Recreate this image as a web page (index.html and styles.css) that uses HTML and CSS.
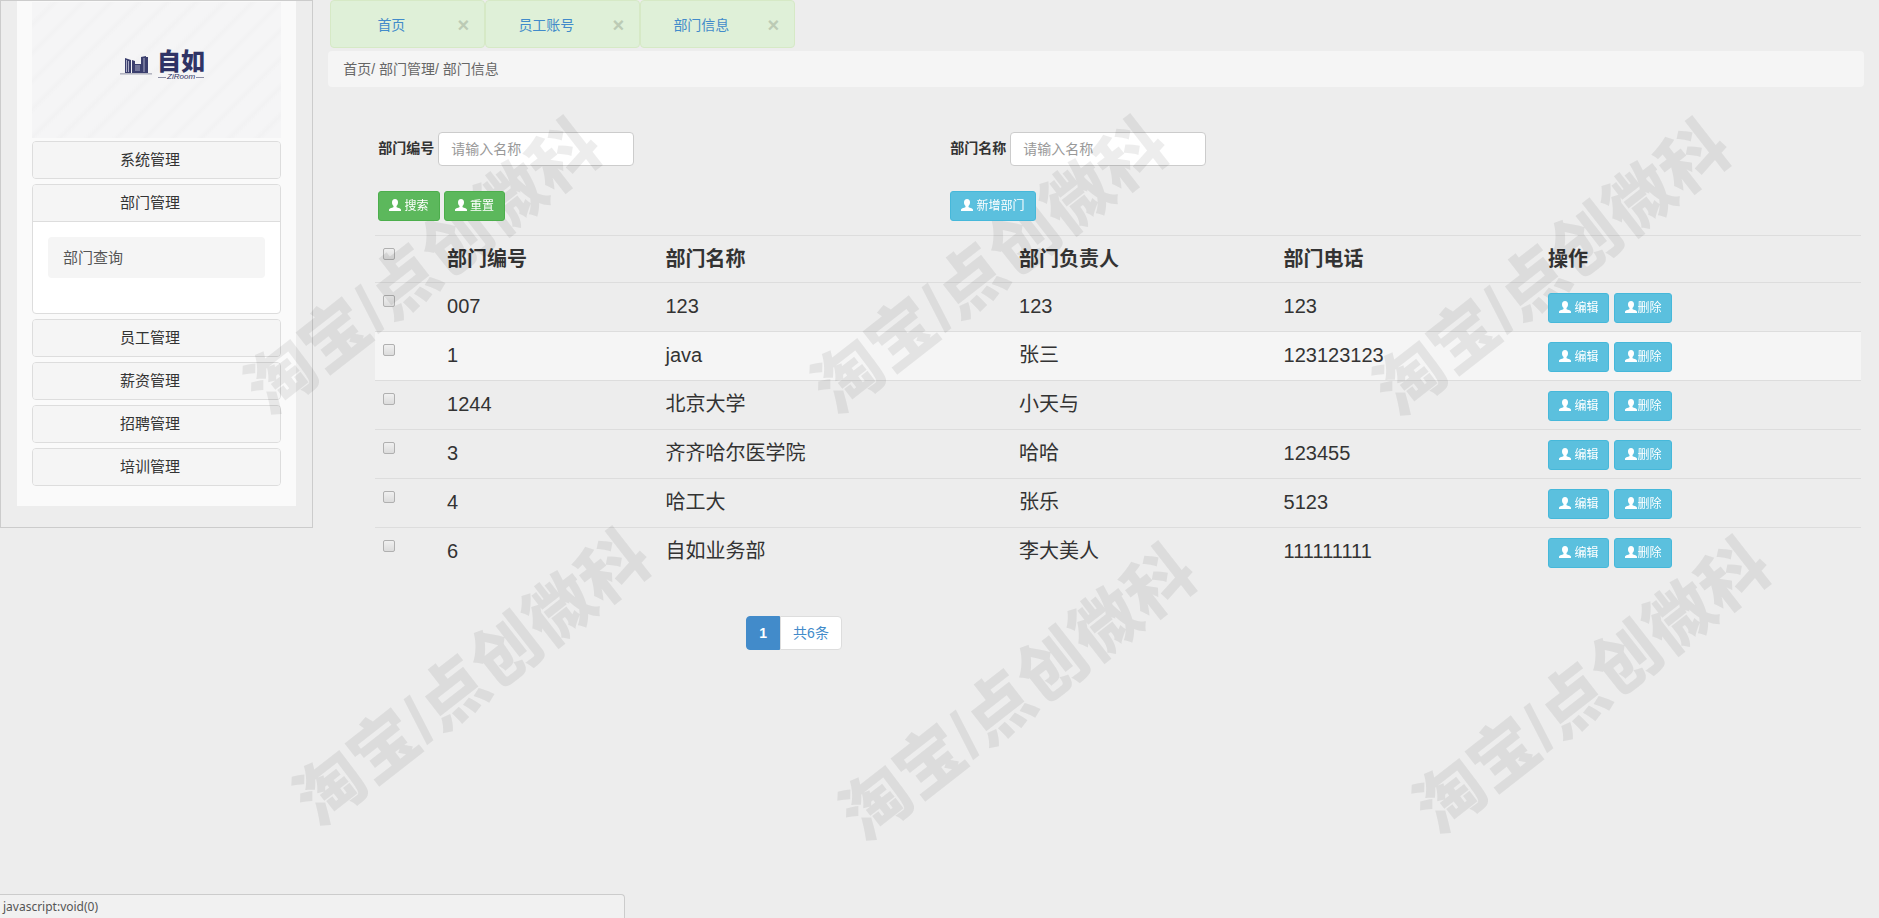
FILE: index.html
```html
<!DOCTYPE html>
<html lang="zh-CN">
<head>
    <meta charset="UTF-8">
    <meta name="viewport" content="width=device-width, initial-scale=1.0">
    <title>部门信息</title>
    <link rel="stylesheet" href="styles.css">
</head>
<body>
    <!-- user icon shared by all buttons -->
    <svg class="sprite" aria-hidden="true">
        <symbol id="user" viewBox="0 0 12 12">
            <path d="M6 0C4 0 3 1.300 3 3.200c0 1.600.6 3 1.500 3.800v1C4.500 8.800 0 9 0 10.800V12h12v-1.200C12 9 7.500 8.800 7.500 8V7C8.400 6.200 9 4.800 9 3.200 9 1.300 8 0 6 0z"/>
        </symbol>
    </svg>

    <div class="row">
        <aside class="sidebar">
            <div class="sidebar-inner">
                <div class="logo">
                    <svg class="logo-mark" width="32" height="20" viewBox="0 0 32 20" aria-hidden="true">
                        <path class="ground" d="M0 18.500h32v.8H0z"/>
                        <path d="M5 3l6 2v13H5zM12 5l3 1v12h-3zM15 9h6v9h-6zM21 2l5-1v17h-5zM26 2h2v16h-2z"/>
                        <path class="gap" d="M6.500 5v12M8.500 6v11M15 11h5M15 13h5M15 15h5M24 3v14"/>
                    </svg>
                    <div class="logo-text">
                        <span class="logo-name">自如</span>
                        <span class="logo-en">ZiRoom</span>
                    </div>
                </div>
                <nav class="menu">
                    <div class="panel"><a class="panel-heading" href="#">系统管理</a></div>
                    <div class="panel">
                        <a class="panel-heading" href="#">部门管理</a>
                        <div class="panel-body">
                            <a class="sub-item" href="#">部门查询</a>
                        </div>
                    </div>
                    <div class="panel"><a class="panel-heading" href="#">员工管理</a></div>
                    <div class="panel"><a class="panel-heading" href="#">薪资管理</a></div>
                    <div class="panel"><a class="panel-heading" href="#">招聘管理</a></div>
                    <div class="panel"><a class="panel-heading" href="#">培训管理</a></div>
                </nav>
            </div>
        </aside>

        <main class="main">
            <div class="tabs">
                <div class="tab"><a href="#">首页</a><button class="close" type="button" aria-label="关闭">×</button></div>
                <div class="tab"><a href="#">员工账号</a><button class="close" type="button" aria-label="关闭">×</button></div>
                <div class="tab"><a href="#">部门信息</a><button class="close" type="button" aria-label="关闭">×</button></div>
            </div>
            <div class="breadcrumb">首页/ 部门管理/ 部门信息</div>

            <div class="content">
                <form class="search">
                    <div class="field">
                        <label for="deptNo">部门编号</label>
                        <input id="deptNo" type="text" placeholder="请输入名称">
                    </div>
                    <div class="field">
                        <label for="deptName">部门名称</label>
                        <input id="deptName" type="text" placeholder="请输入名称">
                    </div>
                    <div class="actions">
                        <button class="btn btn-success" type="button"><svg class="icon"><use href="#user"/></svg> 搜索</button>
                        <button class="btn btn-success" type="reset"><svg class="icon"><use href="#user"/></svg> 重置</button>
                    </div>
                    <div class="actions">
                        <button class="btn btn-info" type="button"><svg class="icon"><use href="#user"/></svg> 新增部门</button>
                    </div>
                </form>

                <table class="table">
                    <thead>
                        <tr>
                            <th class="col-check"><input type="checkbox" aria-label="全选"></th>
                            <th class="col-no">部门编号</th>
                            <th class="col-name">部门名称</th>
                            <th class="col-leader">部门负责人</th>
                            <th class="col-phone">部门电话</th>
                            <th>操作</th>
                        </tr>
                    </thead>
                    <tbody id="rows"></tbody>
                </table>

                <ul class="pagination">
                    <li><a class="active" href="#">1</a></li>
                    <li><a href="#">共6条</a></li>
                </ul>
            </div>
        </main>
    </div>

    <div class="watermarks" aria-hidden="true">
        <span class="wm wm-1">淘宝/点创微科</span>
        <span class="wm wm-2">淘宝/点创微科</span>
        <span class="wm wm-3">淘宝/点创微科</span>
        <span class="wm wm-4">淘宝/点创微科</span>
        <span class="wm wm-5">淘宝/点创微科</span>
        <span class="wm wm-6">淘宝/点创微科</span>
    </div>

    <div class="status">javascript:void(0)</div>

    <script>
        const depts = [
            ['007', '123', '123', '123'],
            ['1', 'java', '张三', '123123123'],
            ['1244', '北京大学', '小天与', ''],
            ['3', '齐齐哈尔医学院', '哈哈', '123455'],
            ['4', '哈工大', '张乐', '5123'],
            ['6', '自如业务部', '李大美人', '111111111']
        ];
        const icon = '<svg class="icon"><use href="#user"/></svg>';

        document.getElementById('rows').innerHTML = depts.map((d, i) => `
            <tr${i === 1 ? ' class="hover"' : ''}>
                <td><input type="checkbox" aria-label="选择 ${d[0]}"></td>
                ${d.map(v => `<td>${v}</td>`).join('')}
                <td><div class="row-actions">
                    <button class="btn btn-info" type="button">${icon} 编辑</button>
                    <button class="btn btn-info" type="button">${icon}删除</button>
                </div></td>
            </tr>`).join('');
    </script>
</body>
</html>
```

FILE: styles.css
```css
* {
    box-sizing: border-box;
}
body {
    margin: 0;
    min-height: 100vh;
    position: relative;
    overflow-x: hidden;
    background: #ededed;
    color: #333;
    font-family: "Liberation Sans", "Noto Sans CJK SC", sans-serif;
    font-size: 14px;
    line-height: 20px;
}
a {
    color: #428bca;
    text-decoration: none;
}
.sprite {
    display: none;
}
.row {
    display: flex;
    align-items: flex-start;
}

/* sidebar */
.sidebar {
    width: 16.67%;
    padding: 0 16px 21px;
    border: 1px solid #ccc;
}
.sidebar-inner {
    padding: 1px 15px 20px;
    background: #fafafa;
}
.logo {
    display: flex;
    align-items: center;
    justify-content: center;
    gap: 5px;
    height: 136px;
    margin-bottom: 3px;
    padding: 0 0 10px 12px;
    background: repeating-linear-gradient(135deg, #f5f5f6 0 12px, #f2f2f3 16px, #f5f5f6 20px);
}
.logo-mark {
    fill: #3b3f6e;
}
.logo-mark .ground {
    fill: #77798f;
}
.logo-mark .gap {
    fill: none;
    stroke: #a9abc4;
}
.logo-text {
    display: flex;
    flex-direction: column;
    align-items: center;
    color: #2f3365;
}
.logo-name {
    font-size: 24px;
    font-weight: 900;
    line-height: 24px;
}
.logo-en {
    display: flex;
    align-items: center;
    gap: 1px;
    font-size: 8px;
    font-style: italic;
    line-height: 6px;
}
.logo-en::before,
.logo-en::after {
    content: "";
    width: 8px;
    height: 1px;
    background: #8a8ca3;
}
.menu {
    display: flex;
    flex-direction: column;
    gap: 5px;
}
.panel {
    border: 1px solid #ddd;
    border-radius: 4px;
    background: #fff;
    overflow: hidden;
}
.panel-heading {
    display: block;
    padding: 8px 13px 8px 0;
    background: #f5f5f5;
    color: #333;
    font-size: 15px;
    text-align: center;
}
.panel-body {
    height: 92px;
    padding: 15px;
    border-top: 1px solid #ddd;
}
.sub-item {
    display: block;
    padding: 11px 15px 10px;
    border-radius: 4px;
    background: #f5f5f5;
    color: #555;
    font-size: 15px;
}

/* tabs and breadcrumb */
.main {
    flex: 1;
    padding: 0 15px;
}
.tabs {
    display: flex;
    padding-left: 2px;
}
.tab {
    display: flex;
    align-items: center;
    width: 155px;
    height: 48px;
    padding: 2px 15px 0 0;
    border: 1px solid #d6e9c6;
    border-radius: 4px;
    background: #dff0d8;
}
.tab a {
    flex: 1;
    padding-right: 6px;
    text-align: center;
}
.close {
    padding: 0;
    border: 0;
    background: none;
    color: #bccbb5;
    font-family: inherit;
    font-size: 20px;
    font-weight: bold;
    line-height: 20px;
    cursor: pointer;
}
.breadcrumb {
    margin-top: 3px;
    padding: 8px 15px;
    border-radius: 4px;
    background: #f5f5f5;
    color: #666;
}

/* search form */
.content {
    padding: 45px 3px 0 47px;
}
.search {
    display: grid;
    grid-template-columns: 572px 1fr;
    row-gap: 25px;
    padding-left: 3px;
}
.field {
    display: flex;
    align-items: center;
    gap: 4px;
}
.field label {
    margin-bottom: 3px;
    font-weight: bold;
}
.field input {
    width: 196px;
    height: 34px;
    padding: 6px 12px;
    border: 1px solid #ccc;
    border-radius: 4px;
    background: #fff;
    font: inherit;
}
.field input::placeholder {
    color: #999;
}
.actions {
    display: flex;
    gap: 4px;
}
.row-actions {
    display: flex;
    gap: 5px;
    padding-top: 2px;
}
.btn {
    position: relative;
    z-index: 2;
    padding: 5px 10px;
    border: 1px solid;
    border-radius: 3px;
    color: #fff;
    font-family: inherit;
    font-size: 12px;
    line-height: 18px;
    cursor: pointer;
}
.btn-success {
    background: #5cb85c;
    border-color: #4cae4c;
}
.btn-info {
    background: #5bc0de;
    border-color: #46b8da;
}
.icon {
    width: 12px;
    height: 12px;
    fill: currentColor;
    vertical-align: -1px;
}

/* table */
.table {
    width: 100%;
    margin-top: 14px;
    border-collapse: collapse;
    table-layout: fixed;
    font-size: 20px;
    line-height: 30px;
}
.table th,
.table td {
    padding: 8px;
    border-top: 1px solid #ddd;
    text-align: left;
    vertical-align: top;
}
.table th {
    height: 47px;
}
.table td {
    height: 49px;
}
.table .hover {
    background: #f5f5f5;
}
.table input {
    appearance: none;
    display: block;
    width: 12px;
    height: 12px;
    margin: 4px 0 0;
    border: 1px solid #b0b0b0;
    border-radius: 2px;
    background: linear-gradient(#f0f0f0, #dcdcdc);
}
.table input:checked {
    background: #428bca;
}
.col-check { width: 4.3%; }
.col-no { width: 14.7%; }
.col-name { width: 23.8%; }
.col-leader { width: 17.8%; }
.col-phone { width: 17.8%; }

/* pagination */
.pagination {
    display: flex;
    justify-content: center;
    margin: 39px 0 0;
    padding: 0 648px 0 0;
    list-style: none;
}
.pagination a {
    display: block;
    padding: 6px 12px;
    border: 1px solid #ddd;
    border-radius: 0 4px 4px 0;
    background: #fff;
}
.pagination .active {
    border-color: #428bca;
    border-radius: 4px 0 0 4px;
    background: #428bca;
    color: #fff;
    font-weight: bold;
}

/* watermark layer over the page */
.watermarks {
    position: absolute;
    inset: 0;
    z-index: 1;
    overflow: hidden;
    pointer-events: none;
}
.wm {
    position: absolute;
    transform: translate(-50%, -50%) rotate(-38deg);
    color: rgba(0, 0, 0, 0.07);
    font-size: 68px;
    font-weight: 900;
    line-height: 68px;
    white-space: nowrap;
}
.wm-1 { left: 22.5%; top: 29.1%; }
.wm-2 { left: 52.7%; top: 29%; }
.wm-3 { left: 82.6%; top: 29.2%; }
.wm-4 { left: 25.1%; top: 73.9%; }
.wm-5 { left: 54.2%; top: 75.5%; }
.wm-6 { left: 84.7%; top: 74.7%; }

/* link hint in the bottom corner */
.status {
    position: fixed;
    left: 0;
    bottom: 0;
    width: 625px;
    height: 24px;
    padding: 2px 3px;
    border: 1px solid #ccc;
    border-width: 1px 1px 0 0;
    border-radius: 0 4px 0 0;
    background: #f1f1f1;
    color: #555;
    font-family: "Noto Sans", sans-serif;
    font-size: 12px;
}
```
